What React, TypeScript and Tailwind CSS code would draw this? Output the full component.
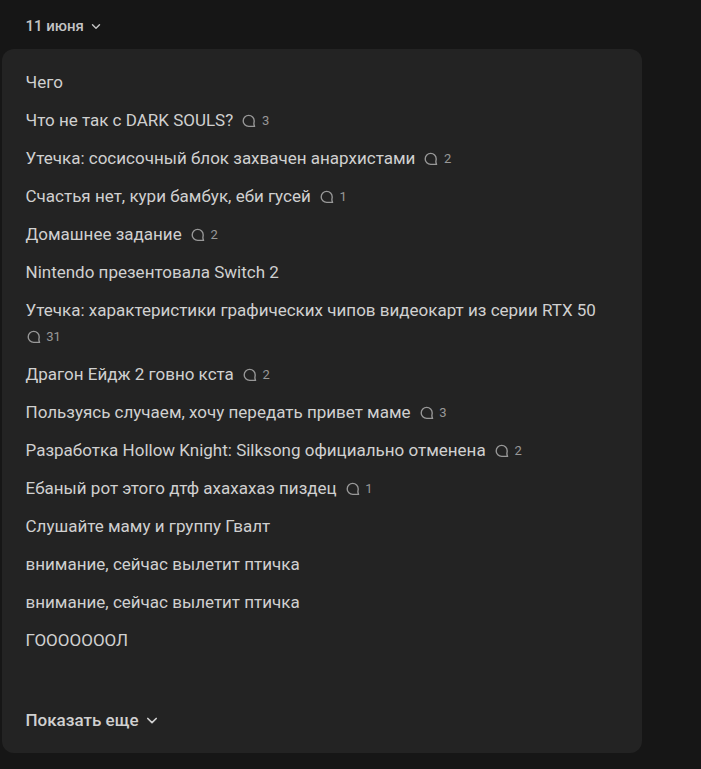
import React from 'react';

interface NewsItem {
    title: string;
    comments?: number;
}

const items: NewsItem[] = [
    { title: 'Чего' },
    { title: 'Что не так с DARK SOULS?', comments: 3 },
    { title: 'Утечка: сосисочный блок захвачен анархистами', comments: 2 },
    { title: 'Счастья нет, кури бамбук, еби гусей', comments: 1 },
    { title: 'Домашнее задание', comments: 2 },
    { title: 'Nintendo презентовала Switch 2' },
    { title: 'Утечка: характеристики графических чипов видеокарт из серии RTX 50', comments: 31 },
    { title: 'Драгон Ейдж 2 говно кста', comments: 2 },
    { title: 'Пользуясь случаем, хочу передать привет маме', comments: 3 },
    { title: 'Разработка Hollow Knight: Silksong официально отменена', comments: 2 },
    { title: 'Ебаный рот этого дтф ахахахаэ пиздец', comments: 1 },
    { title: 'Слушайте маму и группу Гвалт' },
    { title: 'внимание, сейчас вылетит птичка' },
    { title: 'внимание, сейчас вылетит птичка' },
    { title: 'ГОООООООЛ' },
];

const Chevron: React.FC<{ className: string }> = ({ className }) => (
    <svg className={className} viewBox="0 0 12 12" fill="none" stroke="currentColor" strokeWidth="1.7" strokeLinecap="round" strokeLinejoin="round">
        <path d="M1.8 4.5 6 8.7 10.2 4.5" />
    </svg>
);

const CommentIcon: React.FC = () => (
    <svg className="h-4 w-4" viewBox="0 0 16 16" fill="none" stroke="currentColor" strokeWidth="1.35" strokeLinecap="round" strokeLinejoin="round">
        <path d="M13.6 13.4H7.7A5.5 5.5 0 1 1 13.2 7.9c0 1.1-.3 1.9-.3 2.8 0 1 .3 1.8.7 2.7Z" />
    </svg>
);

const App: React.FC = () => {
    return (
        <div className="h-[769px] w-[701px] overflow-hidden bg-[#161616] font-['Roboto','Liberation_Sans',sans-serif] text-[#d0d0d0]">
            <button className="flex h-[49px] items-center gap-[7px] pl-[25.5px] pt-[3px] text-[15px] font-medium text-[#c4c4c4]">
                11 июня
                <Chevron className="h-2.5 w-2.5" />
            </button>
            <div className="ml-[2px] h-[704px] w-[640px] rounded-xl bg-[#232323] pl-[23.5px] pr-6 pt-5">
                <ul className="flex flex-col gap-3">
                    {items.map((item, i) => (
                        <li key={i} className="text-[17px] leading-[26px]">
                            <span className="mr-[3.75px]">{item.title}</span>
                            {item.comments && (
                                <>
                                    {' '}
                                    <span className="inline-flex h-[26px] items-center gap-[4.75px] pt-0.5 align-top text-[13px] leading-6 text-[#989898]">
                                        <CommentIcon />
                                        {item.comments}
                                    </span>
                                </>
                            )}
                        </li>
                    ))}
                </ul>
                <button className="mt-[54px] flex items-center gap-[7px] text-[17px] font-medium leading-[26px]">
                    Показать еще
                    <Chevron className="h-3 w-3" />
                </button>
            </div>
        </div>
    );
};

export default App;
